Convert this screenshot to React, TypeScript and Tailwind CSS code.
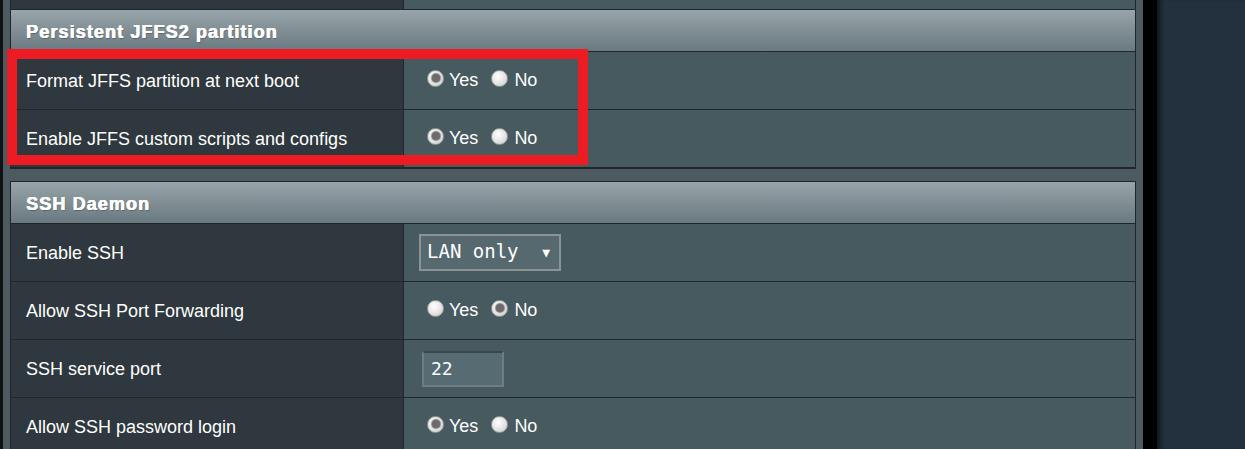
import React from "react";

const Radio = ({ checked, ml = "ml-[8px]" }: { checked?: boolean; ml?: string }) => (
  <span className={`${ml} mb-[5px] flex h-[17px] w-[17px] shrink-0 items-center justify-center rounded-full border border-[#9a9a9a] bg-[radial-gradient(circle_at_40%_35%,#ffffff_0%,#e4e4e4_55%,#c4c4c4_100%)]`}>
    {checked && <span className="h-[8px] w-[8px] rounded-full bg-[#6b6b6b] shadow-[0_0_1px_1px_#8a8a8a]" />}
  </span>
);

const YesNo = ({ yes }: { yes: boolean }) => (
  <div className="flex items-center text-[18px] text-white">
    <Radio checked={yes} />
    <span className="ml-[5px]">Yes</span>
    <Radio checked={!yes} ml="ml-[13px]" />
    <span className="ml-[6px]">No</span>
  </div>
);

const Row = ({ label, children }: { label: string; children?: React.ReactNode }) => (
  <div className="grid h-[58px] grid-cols-[393px_1fr] border-b border-[#202629]">
    <div className="flex items-center border-r border-[#202629] bg-[#2e383e] pl-[15px] pt-[1px] text-[18px] text-white">
      {label}
    </div>
    <div className="flex items-center bg-[#475a60] pl-[15px]">{children}</div>
  </div>
);

const Header = ({ title }: { title: string }) => (
  <div className="flex h-[42px] items-center border-b border-[#202629] bg-gradient-to-b from-[#98a5aa] to-[#6a7980] pl-[15px] pt-[3px] text-[18px] font-bold tracking-[1.1px] text-white [text-shadow:0.6px_0_0_#ffffff,0_0.4px_0_#ffffff,1px_1px_1px_rgba(0,0,0,0.25)]">
    {title}
  </div>
);

export default function App() {
  return (
    <div className="flex h-[449px] w-[1245px] overflow-hidden bg-[#22313d] font-['Liberation_Sans',Arial,sans-serif]">
      <div className="w-[3px] shrink-0 bg-[#101214]" />
      <div className="flex w-[1140px] shrink-0 flex-col bg-[#4d5a60] px-[7px]">
        <div className="relative border-x border-b border-[#202629]">
          <div className="grid h-[10px] grid-cols-[393px_1fr] border-b border-[#202629]">
            <div className="border-r border-[#202629] bg-[#2e383e]" />
            <div className="bg-[#475a60]" />
          </div>
          <Header title="Persistent JFFS2 partition" />
          <Row label="Format JFFS partition at next boot">
            <YesNo yes />
          </Row>
          <Row label="Enable JFFS custom scripts and configs">
            <YesNo yes />
          </Row>
          <div className="absolute left-[-4px] top-[49px] h-[116px] w-[581px] border-[10px] border-[#ed1c24]" />
        </div>

        <div className="mt-[12px] border-x border-t border-[#202629]">
          <Header title="SSH Daemon" />
          <Row label="Enable SSH">
            <div className="flex h-[37px] w-[142px] items-center justify-between border-2 border-[#8b9397] bg-[#56696f] pl-[6px] pr-[9px] font-['DejaVu_Sans_Mono',monospace] text-[19px] text-white">
              <span className="mb-[2px]">LAN only</span>
              <span className="text-[13px]">▼</span>
            </div>
          </Row>
          <Row label="Allow SSH Port Forwarding">
            <YesNo yes={false} />
          </Row>
          <Row label="SSH service port">
            <div className="ml-[3px] flex h-[36px] w-[82px] items-center border-2 border-[#6c7d83] border-t-[#3b464b] bg-[#576b72] pl-[7px] font-['DejaVu_Sans_Mono',monospace] text-[18px] text-white">
              22
            </div>
          </Row>
          <Row label="Allow SSH password login">
            <YesNo yes />
          </Row>
        </div>
      </div>
      <div className="w-[14px] shrink-0 bg-black" />
      <div className="flex-1 bg-[#22313d] shadow-[inset_6px_0_5px_-3px_rgba(0,0,0,0.55)]" />
    </div>
  );
}
